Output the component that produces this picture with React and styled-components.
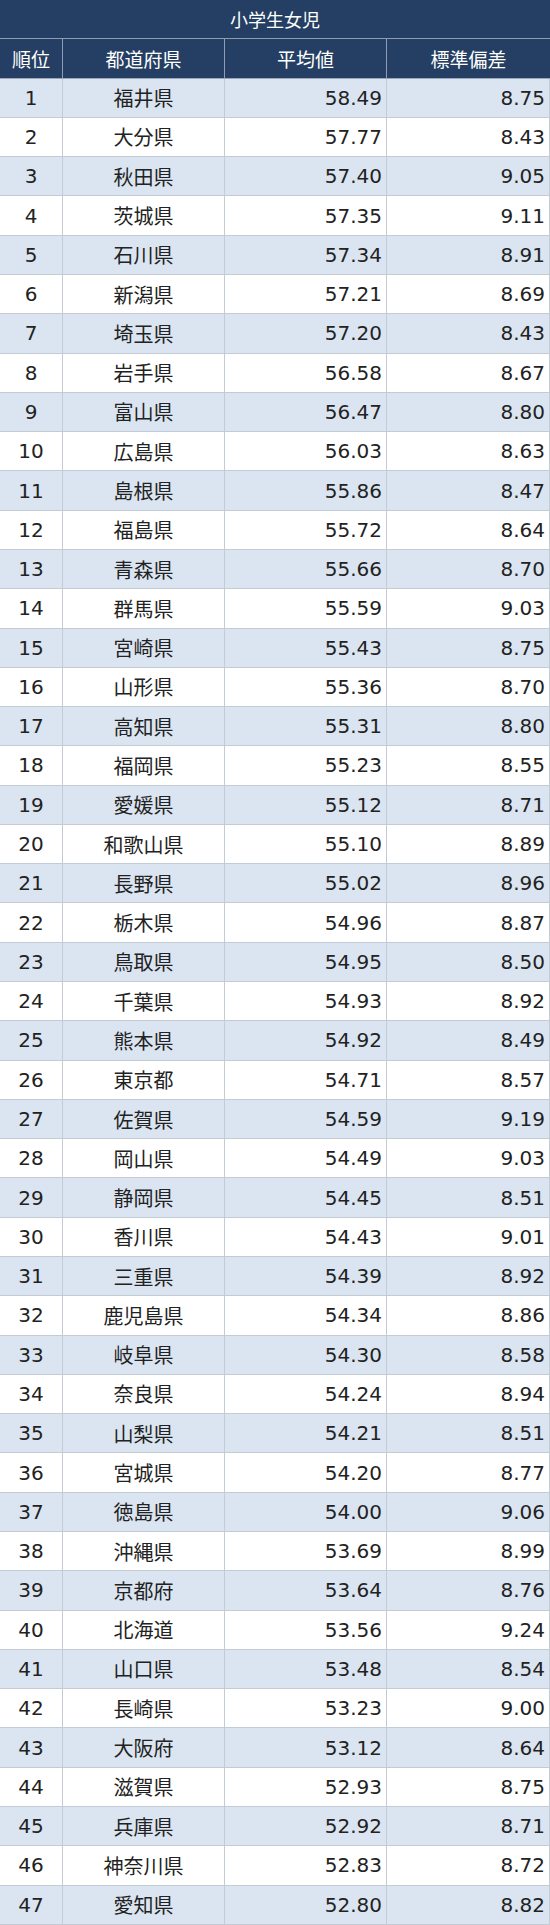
import React from 'react';
import styled, { createGlobalStyle } from 'styled-components';

const rows = [
  ['福井県', '58.49', '8.75'],
  ['大分県', '57.77', '8.43'],
  ['秋田県', '57.40', '9.05'],
  ['茨城県', '57.35', '9.11'],
  ['石川県', '57.34', '8.91'],
  ['新潟県', '57.21', '8.69'],
  ['埼玉県', '57.20', '8.43'],
  ['岩手県', '56.58', '8.67'],
  ['富山県', '56.47', '8.80'],
  ['広島県', '56.03', '8.63'],
  ['島根県', '55.86', '8.47'],
  ['福島県', '55.72', '8.64'],
  ['青森県', '55.66', '8.70'],
  ['群馬県', '55.59', '9.03'],
  ['宮崎県', '55.43', '8.75'],
  ['山形県', '55.36', '8.70'],
  ['高知県', '55.31', '8.80'],
  ['福岡県', '55.23', '8.55'],
  ['愛媛県', '55.12', '8.71'],
  ['和歌山県', '55.10', '8.89'],
  ['長野県', '55.02', '8.96'],
  ['栃木県', '54.96', '8.87'],
  ['鳥取県', '54.95', '8.50'],
  ['千葉県', '54.93', '8.92'],
  ['熊本県', '54.92', '8.49'],
  ['東京都', '54.71', '8.57'],
  ['佐賀県', '54.59', '9.19'],
  ['岡山県', '54.49', '9.03'],
  ['静岡県', '54.45', '8.51'],
  ['香川県', '54.43', '9.01'],
  ['三重県', '54.39', '8.92'],
  ['鹿児島県', '54.34', '8.86'],
  ['岐阜県', '54.30', '8.58'],
  ['奈良県', '54.24', '8.94'],
  ['山梨県', '54.21', '8.51'],
  ['宮城県', '54.20', '8.77'],
  ['徳島県', '54.00', '9.06'],
  ['沖縄県', '53.69', '8.99'],
  ['京都府', '53.64', '8.76'],
  ['北海道', '53.56', '9.24'],
  ['山口県', '53.48', '8.54'],
  ['長崎県', '53.23', '9.00'],
  ['大阪府', '53.12', '8.64'],
  ['滋賀県', '52.93', '8.75'],
  ['兵庫県', '52.92', '8.71'],
  ['神奈川県', '52.83', '8.72'],
  ['愛知県', '52.80', '8.82'],
];

export default function App() {
  return (
    <>
      <GlobalStyle />
      <Table>
        <Title>小学生女児</Title>
        <HeadRow>
          <HeadCell>順位</HeadCell>
          <HeadCell>都道府県</HeadCell>
          <HeadCell>平均値</HeadCell>
          <HeadCell>標準偏差</HeadCell>
        </HeadRow>
        {rows.map(([pref, avg, sd], i) => (
          <Row key={pref} $striped={i % 2 === 0}>
            <Cell>{i + 1}</Cell>
            <Cell>{pref}</Cell>
            <Cell $right>{avg}</Cell>
            <Cell $right>{sd}</Cell>
          </Row>
        ))}
      </Table>
    </>
  );
}

const GlobalStyle = createGlobalStyle`
  html, body {
    margin: 0;
    padding: 0;
    background: #ffffff;
  }
  body {
    font-family: "DejaVu Sans", "Noto Sans CJK JP", sans-serif;
  }
`;

const Table = styled.div`
  display: flex;
  flex-direction: column;
  width: 550px;
  height: 1925px;
`;

const Title = styled.div`
  flex: 1;
  display: flex;
  align-items: center;
  justify-content: center;
  background: #243f63;
  color: #ffffff;
  font-size: 18px;
  border-bottom: 1px solid #8d9db4;
`;

const HeadRow = styled.div`
  flex: 1;
  display: grid;
  grid-template-columns: 63px 162px 162px 163px;
  background: #243f63;
  border-bottom: 1px solid #9aa8ba;
`;

const HeadCell = styled.div`
  display: flex;
  align-items: center;
  justify-content: center;
  color: #ffffff;
  font-size: 19px;
  border-right: 1px solid #8d9db4;
  &:last-child {
    border-right: none;
  }
`;

const Row = styled.div`
  flex: 1;
  display: grid;
  grid-template-columns: 63px 162px 162px 163px;
  background: ${props => (props.$striped ? '#dbe5f1' : '#ffffff')};
  border-bottom: 1px solid #c3cbd5;
`;

const Cell = styled.div`
  display: flex;
  align-items: center;
  justify-content: ${props => (props.$right ? 'flex-end' : 'center')};
  padding: ${props => (props.$right ? '0 4px 0 0' : '0')};
  color: #222222;
  font-size: 20px;
  border-right: 1px solid #c3cbd5;
`;
